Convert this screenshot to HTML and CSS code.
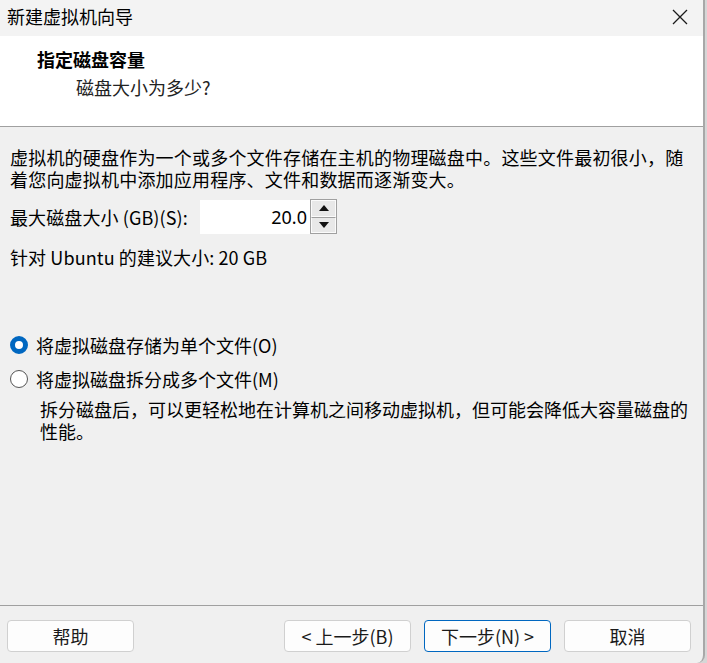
FILE: index.html
```html
<!DOCTYPE html>
<html lang="zh-CN">
<head>
<meta charset="utf-8">
<title>新建虚拟机向导</title>
<link rel="stylesheet" href="styles.css">
</head>
<body>
<div class="window">
  <div class="titlebar">
    <span class="title">新建虚拟机向导</span>
    <svg class="close" width="16" height="16" viewBox="0 0 16 16"><path d="M1 1 L15 15 M15 1 L1 15" stroke="#1a1a1a" stroke-width="1.3" fill="none"/></svg>
  </div>
  <div class="header">
    <div class="h-title">指定磁盘容量</div>
    <div class="h-sub">磁盘大小为多少?</div>
  </div>
  <div class="content">
    <p class="intro">虚拟机的硬盘作为一个或多个文件存储在主机的物理磁盘中。这些文件最初很小，随着您向虚拟机中添加应用程序、文件和数据而逐渐变大。</p>
    <div class="size-row">
      <span class="label">最大磁盘大小 (GB)(S):</span>
      <div class="spin">
        <div class="spin-input">20.0</div>
        <div class="spin-btns">
          <div class="spin-btn"><svg width="10" height="6" viewBox="0 0 10 6"><path d="M0 6 L5 0 L10 6 Z" fill="#111"/></svg></div>
          <div class="spin-btn"><svg width="10" height="6" viewBox="0 0 10 6"><path d="M0 0 L10 0 L5 6 Z" fill="#111"/></svg></div>
        </div>
      </div>
    </div>
    <div class="recommend">针对 Ubuntu 的建议大小: 20 GB</div>
    <label class="radio-row first"><span class="radio checked"></span><span>将虚拟磁盘存储为单个文件(O)</span></label>
    <label class="radio-row"><span class="radio"></span><span>将虚拟磁盘拆分成多个文件(M)</span></label>
    <p class="desc">拆分磁盘后，可以更轻松地在计算机之间移动虚拟机，但可能会降低大容量磁盘的性能。</p>
  </div>
  <div class="footer">
    <button class="btn">帮助</button>
    <div class="spacer"></div>
    <button class="btn">&lt; 上一步(B)</button>
    <button class="btn primary">下一步(N) &gt;</button>
    <button class="btn">取消</button>
  </div>
</div>
</body>
</html>
```
FILE: styles.css
```css
html, body {
  margin: 0;
  padding: 0;
  background: #d6d6d6;
}
body {
  font-family: "Noto Sans CJK SC", "Noto Sans", sans-serif;
  font-size: 18px;
  color: #000;
}
.window {
  width: 703px;
  height: 663px;
  background: #f0f0f0;
  border-right: 2px solid #a8a8a8;
  border-bottom-right-radius: 8px;
  display: flex;
  flex-direction: column;
  overflow: hidden;
}
.titlebar {
  height: 36px;
  flex: none;
  background: #f3f3f3;
  display: flex;
  align-items: center;
  padding: 0 15px 0 7px;
}
.title {
  flex: 1;
  font-size: 18px;
  line-height: 22px;
  padding-bottom: 4px;
}
.close {
  margin-bottom: 3px;
}
.header {
  flex: none;
  background: #fff;
  border-bottom: 1px solid #a0a0a0;
  box-sizing: border-box;
  height: 91px;
  padding-top: 12px;
}
.h-title {
  font-weight: bold;
  padding-left: 37px;
  line-height: 22px;
}
.h-sub {
  padding-left: 76px;
  line-height: 22px;
  margin-top: 6px;
  color: #222;
}
.content {
  flex: 1;
  padding: 19px 10px 0 10px;
}
.intro {
  margin: 0;
  line-height: 22px;
  letter-spacing: 0.2px;
}
.size-row {
  display: flex;
  align-items: center;
  margin-top: 9px;
  height: 35px;
}
.label {
  width: 190px;
  line-height: 22px;
  letter-spacing: 0.1px;
}
.spin {
  display: flex;
  height: 35px;
}
.spin-input {
  width: 107px;
  background: #fff;
  text-align: right;
  padding-right: 3px;
  line-height: 34px;
  height: 34px;
  margin-top: 1px;
  font-family: "Noto Sans", sans-serif;
}
.spin-btns {
  width: 25px;
  border: 1px solid #a0a0a0;
  display: flex;
  flex-direction: column;
  background: #e8e8e8;
}
.spin-btn {
  flex: 1;
  display: flex;
  align-items: center;
  justify-content: center;
  border: 1px solid #fbfbfb;
}
.spin-btn + .spin-btn {
  border-top: 1px solid #a0a0a0;
}
.recommend {
  margin-top: 12px;
  line-height: 22px;
  letter-spacing: 0.1px;
}
.radio-row {
  display: flex;
  align-items: center;
  gap: 8px;
  line-height: 22px;
  margin-top: 12px;
}
.radio-row.first {
  margin-top: 66px;
}
.radio {
  width: 18px;
  height: 18px;
  box-sizing: border-box;
  border-radius: 50%;
  border: 1px solid #555;
  background: #fff;
  flex: none;
}
.radio.checked {
  border: 5px solid #0067c0;
  background: #fff;
}
.desc {
  margin: 8px 0 0 30px;
  line-height: 22px;
}
.footer {
  box-sizing: border-box;
  height: 58px;
  flex: none;
  border-top: 1px solid #a0a0a0;
  display: flex;
  align-items: flex-start;
  padding: 14px 12px 0 7px;
  gap: 13px;
}
.spacer {
  flex: 1;
}
.btn {
  width: 127px;
  height: 32px;
  background: #fdfdfd;
  border: 1px solid #d0d0d0;
  border-radius: 4px;
  font-family: "Noto Sans CJK SC", "Noto Sans", sans-serif;
  font-size: 18px;
  color: #1a1a1a;
  padding: 0;
  line-height: 28px;
}
.btn.primary {
  border-color: #0067c0;
}
```
